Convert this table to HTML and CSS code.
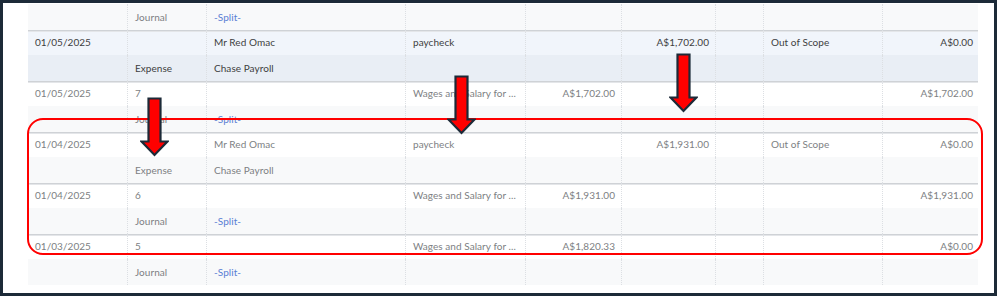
FILE: index.html
```html
<!DOCTYPE html>
<html>
<head>
<meta charset="utf-8">
<link rel="stylesheet" href="styles.css">
</head>
<body>
<div class="frame">
  <div class="grid">
    <div class="row alt">
      <div class="c"></div><div class="c">Journal</div><div class="c link">-Split-</div><div class="c"></div><div class="c r"></div><div class="c r"></div><div class="c"></div><div class="c"></div><div class="c r"></div>
    </div>
    <div class="row start hl dark">
      <div class="c">01/05/2025</div><div class="c"></div><div class="c">Mr Red Omac</div><div class="c">paycheck</div><div class="c r"></div><div class="c r">A$1,702.00</div><div class="c"></div><div class="c">Out of Scope</div><div class="c r">A$0.00</div>
    </div>
    <div class="row hl2 dark">
      <div class="c"></div><div class="c">Expense</div><div class="c">Chase Payroll</div><div class="c"></div><div class="c r"></div><div class="c r"></div><div class="c"></div><div class="c"></div><div class="c r"></div>
    </div>
    <div class="row start">
      <div class="c">01/05/2025</div><div class="c">7</div><div class="c"></div><div class="c">Wages and Salary for ...</div><div class="c r">A$1,702.00</div><div class="c r"></div><div class="c"></div><div class="c"></div><div class="c r">A$1,702.00</div>
    </div>
    <div class="row alt">
      <div class="c"></div><div class="c">Journal</div><div class="c link">-Split-</div><div class="c"></div><div class="c r"></div><div class="c r"></div><div class="c"></div><div class="c"></div><div class="c r"></div>
    </div>
    <div class="row start">
      <div class="c">01/04/2025</div><div class="c"></div><div class="c">Mr Red Omac</div><div class="c">paycheck</div><div class="c r"></div><div class="c r">A$1,931.00</div><div class="c"></div><div class="c">Out of Scope</div><div class="c r">A$0.00</div>
    </div>
    <div class="row alt">
      <div class="c"></div><div class="c">Expense</div><div class="c">Chase Payroll</div><div class="c"></div><div class="c r"></div><div class="c r"></div><div class="c"></div><div class="c"></div><div class="c r"></div>
    </div>
    <div class="row start">
      <div class="c">01/04/2025</div><div class="c">6</div><div class="c"></div><div class="c">Wages and Salary for ...</div><div class="c r">A$1,931.00</div><div class="c r"></div><div class="c"></div><div class="c"></div><div class="c r">A$1,931.00</div>
    </div>
    <div class="row alt">
      <div class="c"></div><div class="c">Journal</div><div class="c link">-Split-</div><div class="c"></div><div class="c r"></div><div class="c r"></div><div class="c"></div><div class="c"></div><div class="c r"></div>
    </div>
    <div class="row start">
      <div class="c">01/03/2025</div><div class="c">5</div><div class="c"></div><div class="c">Wages and Salary for ...</div><div class="c r">A$1,820.33</div><div class="c r"></div><div class="c"></div><div class="c"></div><div class="c r">A$0.00</div>
    </div>
    <div class="row alt">
      <div class="c"></div><div class="c">Journal</div><div class="c link">-Split-</div><div class="c"></div><div class="c r"></div><div class="c r"></div><div class="c"></div><div class="c"></div><div class="c r"></div>
    </div>
  </div>

  <div class="highlight-box"></div>

  <svg class="arrow arrow-1" width="29" height="60" viewBox="0 0 29 60"><polygon points="8.5,1.5 20.5,1.5 20.5,44.5 27.5,44.5 14.5,58 1.5,44.5 8.5,44.5" fill="#ff0000" stroke="#1c2a38" stroke-width="2.2" stroke-linejoin="miter"/></svg>
  <svg class="arrow arrow-2" width="29" height="60" viewBox="0 0 29 60"><polygon points="8.5,1.5 20.5,1.5 20.5,44.5 27.5,44.5 14.5,58 1.5,44.5 8.5,44.5" fill="#ff0000" stroke="#1c2a38" stroke-width="2.2" stroke-linejoin="miter"/></svg>
  <svg class="arrow arrow-3" width="29" height="60" viewBox="0 0 29 60"><polygon points="8.5,1.5 20.5,1.5 20.5,44.5 27.5,44.5 14.5,58 1.5,44.5 8.5,44.5" fill="#ff0000" stroke="#1c2a38" stroke-width="2.2" stroke-linejoin="miter"/></svg>
</div>
</body>
</html>
```

FILE: styles.css
```css
html, body {
  margin: 0;
  padding: 0;
  background: #ffffff;
}

.frame {
  position: relative;
  width: 997px;
  height: 296px;
  box-sizing: border-box;
  border: 3px solid #1c2a38;
  background: #ffffff;
  padding: 1px 0 0 25px;
  overflow: hidden;
  font-family: Lato, "Open Sans", sans-serif;
  font-size: 10px;
  color: #7d7f83;
}

.grid {
  width: 950px;
  display: flex;
  flex-direction: column;
}

.row {
  display: grid;
  grid-template-columns: 100px 79px 199px 120px 96px 94px 48px 119px 95px;
  height: 25.5px;
  background: #ffffff;
}

.row.alt { background: #f8f9fa; }
.row.hl { background: #f1f5fb; }
.row.hl2 { background: #e9eef5; }
.row.start { box-shadow: inset 0 1px 0 #cfd2d6, inset 0 2px 0 #e4e6e9; }
.row.dark { color: #3d3e41; }

.c {
  display: flex;
  align-items: center;
  padding: 0 6px 0 7px;
  border-right: 1px dotted #dcdfe3;
  white-space: nowrap;
  overflow: hidden;
  letter-spacing: 0.05px;
}
.c:last-child { border-right: none; }
.c.r { justify-content: flex-end; padding: 0 6px 0 4px; }
.c:last-child.r { padding-right: 5px; }
.link { color: #5a7fd4; }

.highlight-box {
  position: absolute;
  left: 24px;
  top: 115px;
  width: 956px;
  height: 137px;
  box-sizing: border-box;
  border: 2.5px solid #ff0000;
  border-radius: 16px;
}

.arrow { position: absolute; }
.arrow-1 { left: 137px; top: 94px; }
.arrow-2 { left: 444px; top: 72px; }
.arrow-3 { left: 666px; top: 50px; }
```
